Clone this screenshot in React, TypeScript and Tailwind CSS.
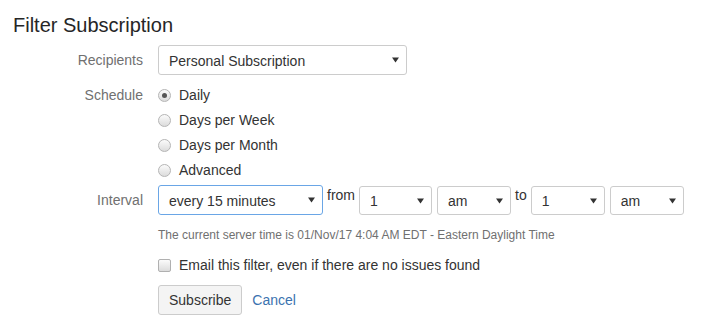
const Caret = () => (
  <svg width="7" height="6" viewBox="0 0 7 6" className="shrink-0">
    <path d="M0 0.5h7L3.5 5.5z" fill="#333" />
  </svg>
);

type SelectProps = {
  value: string;
  className: string;
  focused?: boolean;
};

const FakeSelect = ({ value, className, focused }: SelectProps) => (
  <div
    className={`flex items-center justify-between pl-[10px] pr-[7px] bg-white rounded-[3px] border text-[14px] text-[#333] ${
      focused ? "border-[#6aa6e6]" : "border-[#cccccc]"
    } ${className}`}
  >
    <span className="pt-[2px]">{value}</span>
    <Caret />
  </div>
);

const Radio = ({ label, checked }: { label: string; checked?: boolean }) => (
  <div className="h-[25px] flex items-center gap-[8px]">
    <span className="w-[13px] h-[13px] rounded-full border border-[#b5b5b5] bg-gradient-to-b from-[#fbfbfb] to-[#dcdcdc] flex items-center justify-center">
      {checked && <span className="w-[5px] h-[5px] rounded-full bg-[#555]" />}
    </span>
    <span className="text-[14px] text-[#333]">{label}</span>
  </div>
);

const Row = ({
  label,
  children,
  className = "",
  labelClass = "",
}: {
  label?: string;
  children: React.ReactNode;
  className?: string;
  labelClass?: string;
}) => (
  <div className={`flex ${className}`}>
    <div
      className={`w-[143px] shrink-0 flex justify-end text-[14px] text-[#707070] ${labelClass}`}
    >
      {label}
    </div>
    <div className="ml-[15px] flex-1">{children}</div>
  </div>
);

export default function App() {
  return (
    <div
      className="w-[722px] h-[328px] bg-white overflow-hidden"
      style={{ fontFamily: '"Liberation Sans", Arial, sans-serif' }}
    >
      <h2 className="pt-[13px] pl-[13px] text-[20px] leading-6 text-[#262626]">
        Filter Subscription
      </h2>

      <Row label="Recipients" className="mt-[8px] items-center">
        <FakeSelect value="Personal Subscription" className="w-[249px] h-[30px]" />
      </Row>

      <Row label="Schedule" className="mt-[8px]" labelClass="h-[25px] items-center">
        <div className="flex flex-col">
          <Radio label="Daily" checked />
          <Radio label="Days per Week" />
          <Radio label="Days per Month" />
          <Radio label="Advanced" />
        </div>
      </Row>

      <Row label="Interval" className="mt-[2px] items-center">
        <div className="flex items-start text-[14px] text-[#333]">
          <FakeSelect value="every 15 minutes" className="w-[165px] h-[30px]" focused />
          <span className="px-[4px] leading-5">from</span>
          <FakeSelect value="1" className="w-[73px] h-[29px] mt-[1px]" />
          <FakeSelect value="am" className="ml-[5px] w-[74px] h-[29px] mt-[1px]" />
          <span className="px-[4px] leading-5">to</span>
          <FakeSelect value="1" className="w-[74px] h-[29px] mt-[1px]" />
          <FakeSelect value="am" className="ml-[5px] w-[74px] h-[29px] mt-[1px]" />
        </div>
      </Row>

      <Row className="mt-[11px]">
        <p className="text-[12px] leading-[18px] text-[#707070]">
          The current server time is 01/Nov/17 4:04 AM EDT - Eastern Daylight
          Time
        </p>
      </Row>

      <Row className="mt-[11px]">
        <label className="flex items-center gap-[8px] h-[20px]">
          <span className="w-[13px] h-[13px] rounded-[2px] border border-[#b0b0b0] bg-gradient-to-b from-[#fbfbfb] to-[#dcdcdc]" />
          <span className="text-[14px] text-[#333]">
            Email this filter, even if there are no issues found
          </span>
        </label>
      </Row>

      <Row className="mt-[10px]">
        <div className="flex items-center gap-[10px]">
          <button className="h-[30px] px-[10px] rounded-[3px] border border-[#cccccc] bg-[#f4f4f4] text-[14px] text-[#333]">
            Subscribe
          </button>
          <a className="text-[14px] text-[#3b73af]">Cancel</a>
        </div>
      </Row>
    </div>
  );
}
